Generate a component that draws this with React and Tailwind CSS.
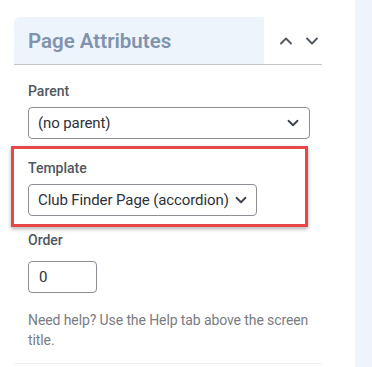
import { ChevronDown, ChevronUp } from 'lucide-react';

const font = { fontFamily: 'Roboto, "Liberation Sans", sans-serif' };

function Select({ value, className }) {
  return (
    <div
      className={`flex h-[32px] items-center justify-between rounded-[4px] border border-[#8c8f94] bg-white pl-[9px] pr-[7px] text-[15px] tracking-[-0.1px] text-[#2c3338] ${className}`}
    >
      <span className="whitespace-nowrap">{value}</span>
      <ChevronDown size={18} strokeWidth={2.4} className="ml-[3px] shrink-0 text-[#3c434a]" />
    </div>
  );
}

export default function App() {
  return (
    <div className="flex h-[367px] w-[372px] overflow-hidden bg-white" style={font}>
      <div className="w-[355px] pl-[14px] pt-[17px]">
        <div className="w-[308px]">
          <div className="flex items-center border-b border-[#c3c4c7]">
            <div className="flex h-[47px] w-[251px] items-center rounded-tl-[6px] rounded-tr-[2px] bg-[#eef4fb] pl-[14px] pt-[2px] text-[20.5px] font-semibold text-[#8093ae]">
              Page Attributes
            </div>
            <div className="ml-[12px] flex items-center gap-[6px] text-[#50575e]">
              <ChevronUp size={20} strokeWidth={2.2} />
              <ChevronDown size={20} strokeWidth={2.2} />
            </div>
          </div>

          <div className="pl-[14px]">
            <div className="mt-[16px] text-[14px] font-medium text-[#50575e]">Parent</div>
            <Select value="(no parent)" className="mt-[5px] w-[282px]" />
          </div>

          <div className="ml-[-3px] mt-[7px] w-[297px] border-[3px] border-[#e8474a] pb-[8px] pl-[14px] pt-[9px] shadow-[0_2px_4px_rgba(0,0,0,0.3)]">
            <div className="text-[14px] font-medium text-[#50575e]">Template</div>
            <Select value="Club Finder Page (accordion)" className="mt-[5px] w-[229px]" />
          </div>

          <div className="pl-[14px]">
            <div className="mt-[3px] text-[14px] font-medium text-[#50575e]">Order</div>
            <div className="mt-[10px] flex h-[32px] w-[69px] items-center rounded-[4px] border border-[#8c8f94] pl-[10px] text-[15px] text-[#2c3338]">
              0
            </div>
            <p className="mt-[17px] w-[290px] text-[14px] leading-[20px] tracking-[-0.1px] text-[#787c82]">
              Need help? Use the Help tab above the screen title.
            </p>
          </div>
          <div className="mt-[13px] border-b border-[#f0f0f1]" />
        </div>
      </div>
      <div className="flex-1 bg-[#eef4fb]" />
    </div>
  );
}
